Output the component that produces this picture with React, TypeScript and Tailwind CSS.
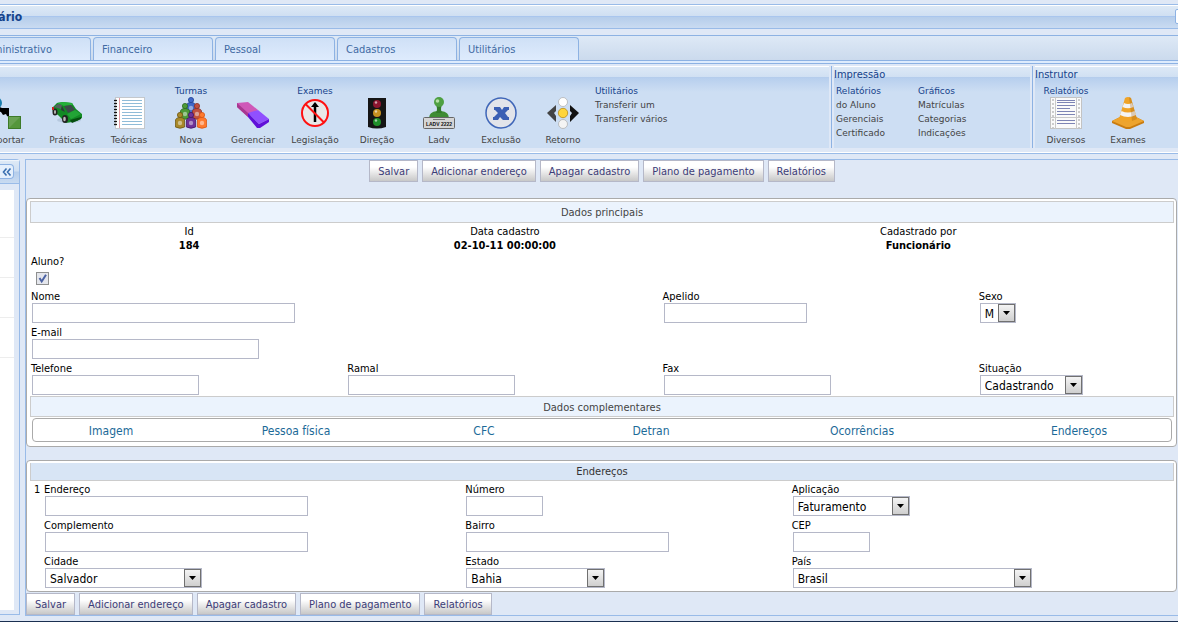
import React from "react";

const TABS = ["Administrativo", "Financeiro", "Pessoal", "Cadastros", "Utilitários"];
const ACTIONS = [
  "Salvar",
  "Adicionar endereço",
  "Apagar cadastro",
  "Plano de pagamento",
  "Relatórios",
];
const SECTIONS = ["Imagem", "Pessoa física", "CFC", "Detran", "Ocorrências", "Endereços"];

const Icon = ({ children }: { children: React.ReactNode }) => (
  <svg viewBox="0 0 32 32" className="block h-8 w-8" aria-hidden="true">
    {children}
  </svg>
);

const ImportIcon = () => (
  <Icon>
    <circle cx="7" cy="6" r="6" fill="#1c7fae" />
    <path d="M8 9l5 2h7v9l-2-1-1-2-3 1-2-3-4-1z" fill="#000" />
    <rect x="19.500" y="19.500" width="12" height="12" fill="#55963c" stroke="#3d7a28" />
    <path d="M20 20h11L20 31z" fill="#fff" opacity=".12" />
  </Icon>
);

const CarIcon = () => (
  <Icon>
    <ellipse cx="18" cy="23" rx="12" ry="3" fill="#9fb3cc" opacity=".5" />
    <path d="M1 11l5-5 6-1 9 1 4 6 6 5v4l-5 3-11 2-8-8-5-3z" fill="#128a24" />
    <path d="M6 6l6-1 9 1 1 2-9 1z" fill="#24b03a" />
    <path d="M3 10l4-3 4 1-1 4z" fill="#55615f" />
    <path d="M13 9l7-1 4 5-7 3z" fill="#3c4a4a" />
    <path d="M11 9l3 6-4-2z" fill="#2c3838" />
    <path d="M16 17l8-4 6 4-10 5z" fill="#22a436" />
    <ellipse cx="4" cy="15" rx="2.500" ry="3.500" fill="#222" />
    <ellipse cx="4" cy="15" rx="1" ry="2" fill="#bbb" />
    <ellipse cx="14" cy="22" rx="3" ry="4" fill="#222" />
    <ellipse cx="13.500" cy="22" rx="1.300" ry="2.200" fill="#bbb" />
    <path d="M19 23l11-3v2l-9 4z" fill="#064d10" />
    <path d="M1 10h2v3H1z" fill="#c22" />
  </Icon>
);

const NotebookIcon = () => (
  <Icon>
    <rect x="2.500" y=".5" width="29" height="31" fill="#fff" stroke="#c4c8cc" />
    {[4, 7, 10, 13, 16, 19, 22, 25, 28].map((y) => (
      <path key={y} d={`M9 ${y - 0.5}h20`} stroke="#8fbcd8" />
    ))}
    <path d="M6.500 1v30" stroke="#e59aa0" />
    {[3, 6, 9, 12, 15, 18, 21, 24, 27].map((y) => (
      <path key={y} d={`M1 ${y + 0.5}h3`} stroke="#111" strokeWidth="1.300" />
    ))}
  </Icon>
);

const Person = ({ x, y, fill, dark }: { x: number; y: number; fill: string; dark: string }) => (
  <g transform={`translate(${x} ${y})`} fill={fill} stroke={dark} strokeWidth=".8">
    <path d="M-4.600 9q0-3.500 4.600-3.500t4.600 3.500v6q-4.600 2.500-9.200 0z" />
    <circle cx="0" cy="3" r="2.600" />
    <circle cx="0" cy="11" r="2.200" fill="#fff" stroke="none" opacity=".45" />
  </g>
);

const ClassIcon = () => (
  <Icon>
    <Person x={16} y={0} fill="#3f68c8" dark="#1e3f92" />
    <Person x={10} y={6} fill="#4d9a38" dark="#2b6a1c" />
    <Person x={22} y={6} fill="#c0503f" dark="#8c2f22" />
    <Person x={5} y={15} fill="#a8892a" dark="#6f5710" />
    <Person x={16} y={15} fill="#6f3298" dark="#431466" />
    <Person x={27} y={15} fill="#ff7a2e" dark="#d85510" />
  </Icon>
);

const EraserIcon = () => (
  <Icon>
    <path d="M0 6l11-1 10 8-10 7L0 10z" fill="#cf58b8" />
    <path d="M0 6v4l11 10v-4z" fill="#a83890" />
    <path d="M21 13l11 9-10 5-11-11z" fill="#9050ff" />
    <path d="M11 16v4l9 11h3l9-6v-3l-10 5z" fill="#6010d8" />
  </Icon>
);

const NoTurnIcon = () => (
  <Icon>
    <circle cx="16" cy="16" r="13" fill="#e8e8e8" stroke="#f11" strokeWidth="2" />
    <path d="M16 25V9" stroke="#000" strokeWidth="2.500" />
    <path d="M12 10l4-5 4 5z" fill="#000" />
    <path d="M6.500 7l19 19" stroke="#f11" strokeWidth="2" />
  </Icon>
);

const TrafficIcon = () => (
  <Icon>
    <path d="M7 1h18v29q-9 3-18 0z" fill="#151515" />
    <circle cx="16" cy="7" r="4" fill="#8c1630" />
    <circle cx="16" cy="16" r="4" fill="#c69020" />
    <circle cx="16" cy="25" r="4" fill="#1f8f2a" />
    <g fill="#fff" opacity=".6">
      <circle cx="15" cy="5.500" r="1.200" />
      <circle cx="15" cy="14.500" r="1.200" />
      <circle cx="15" cy="23.500" r="1.200" />
    </g>
  </Icon>
);

const PlateIcon = () => (
  <Icon>
    <path d="M6 21q0-6 8-7h4q8 1 8 7z" fill="#3f8c34" />
    <path d="M13 16q2-4 0-8h6q-2 4 0 8z" fill="#347b2b" />
    <circle cx="16" cy="5" r="5" fill="#4ea042" />
    <circle cx="14.500" cy="4" r="1.800" fill="#b5dfa6" />
    <rect x=".5" y="20.500" width="31" height="11" rx="1" fill="#d5d5d5" stroke="#666" />
    <path d="M10 22.500h12" stroke="#777" />
    <text
      x="16"
      y="29"
      textAnchor="middle"
      fontFamily="Liberation Sans, sans-serif"
      fontSize="5"
      fontWeight="700"
      fill="#111"
    >
      LADV 2222
    </text>
  </Icon>
);

const DeleteIcon = () => (
  <Icon>
    <circle cx="16" cy="16" r="15" fill="#e2e4ea" stroke="#3f66b8" strokeWidth="1.500" />
    <path d="M9 10h6l2 3 2-3h5v3h-1l-3 3 3 4h1v3h-6l-3-3-2 3H8v-3h1l4-4-3-3H9z" fill="#3c60b4" />
  </Icon>
);

const ReturnIcon = () => (
  <Icon>
    <path d="M9 8v6l-2 2 2 3v6l-9-9z" fill="#444" />
    <path d="M23 8v6l2 2-2 3v6l9-9z" fill="#111" />
    <circle cx="16" cy="5" r="4.500" fill="#fff" stroke="#aaa" strokeWidth=".7" />
    <circle cx="16" cy="16" r="4.700" fill="#ffd53c" stroke="#b98c14" strokeWidth=".8" />
    <circle cx="16" cy="27" r="4.500" fill="#f4f4f4" stroke="#aaa" strokeWidth=".7" />
  </Icon>
);

const ReportIcon = () => (
  <Icon>
    <rect x=".5" y=".5" width="31" height="31" fill="#fafafa" stroke="#c3c3c3" />
    <path d="M5.500 0v32M26.500 0v32M0 20.500h32" stroke="#c9c9c9" />
    <path d="M3 2v29M29 2v29" stroke="#ccc" strokeWidth="2" strokeDasharray="2 2" />
    <path
      d="M7 3.500h18M7 5.500h18M7 8.500h18M7 11.500h13M7 14.500h18M7 17.500h18M7 23.500h18M7 26.500h18"
      stroke="#7d84b4"
    />
  </Icon>
);

const ConeIcon = () => (
  <Icon>
    <path d="M0 24l10-5h12l10 5v2l-14 6h-4L0 26z" fill="#c97c10" />
    <path d="M0 24l10-5h12l10 5-14 6h-4z" fill="#eda42e" />
    <path d="M13 1q3-2 6 0l6 21q-9 5-18 0z" fill="#f0a428" />
    <path d="M12 6q4 2 8 0l1.500 4q-5.500 2.500-11 0z" fill="#f4f4f4" />
    <path d="M9.500 14q6.500 3 13 0l1.500 4q-8 4-16 0z" fill="#f4f4f4" />
    <path d="M17 0l2 1 6 21-5 2z" fill="#8a4c00" opacity=".25" />
  </Icon>
);

const TOOLS = [
  { name: "Importar", icon: <ImportIcon /> },
  { name: "Práticas", icon: <CarIcon /> },
  { name: "Teóricas", icon: <NotebookIcon /> },
  { name: "Nova", title: "Turmas", icon: <ClassIcon /> },
  { name: "Gerenciar", icon: <EraserIcon /> },
  { name: "Legislação", title: "Exames", icon: <NoTurnIcon /> },
  { name: "Direção", icon: <TrafficIcon /> },
  { name: "Ladv", icon: <PlateIcon /> },
  { name: "Exclusão", icon: <DeleteIcon /> },
  { name: "Retorno", icon: <ReturnIcon /> },
];

const Tool = ({ name, title, icon }: { name: string; title?: string; icon: React.ReactNode }) => (
  <div className="flex w-[62px] shrink-0 flex-col items-center">
    <span className="h-3.5 leading-4 text-[#15428b]">{title}</span>
    <button type="button" className="flex flex-col items-center gap-1">
      {icon}
      <span>{name}</span>
    </button>
  </div>
);

const LinkList = ({ title, items }: { title: string; items: string[] }) => (
  <div className="flex flex-col items-start pl-px leading-4 whitespace-nowrap">
    <span className="h-3.5 text-[#15428b]">{title}</span>
    {items.map((item) => (
      <button type="button" key={item} className="h-3.5">
        {item}
      </button>
    ))}
  </div>
);

const Group = ({
  title,
  className,
  children,
}: {
  title?: string;
  className: string;
  children: React.ReactNode;
}) => (
  <div
    className={`h-[82px] bg-[linear-gradient(to_bottom,#fff_0,#fff_1px,#dde9f6_1px,#d0e0f3_11px,#b3cbeb_11px,#b7cfee_12px,#cddef3_26px)] ${className}`}
  >
    <div className="h-[17px] text-[11px] leading-[18px] text-[#15428b]">{title}</div>
    <div className="flex font-['Verdana','DejaVu_Sans',sans-serif] text-[9px] leading-3.5 text-[#444]">
      {children}
    </div>
  </div>
);

const Actions = ({ className }: { className: string }) => (
  <div className={`flex gap-1 ${className}`}>
    {ACTIONS.map((action) => (
      <button
        type="button"
        key={action}
        className="h-[22px] border border-[#b5b8c8] bg-linear-to-b from-white from-30% to-[#c8c8c8] px-2 pt-0.5 text-[11px] whitespace-nowrap text-[#3c3c78]"
      >
        {action}
      </button>
    ))}
  </div>
);

const Input = ({ label, id, width }: { label: string; id: string; width: string }) => (
  <div className="flex flex-col items-start">
    <label htmlFor={id} className="h-3.5 leading-4">
      {label}
    </label>
    <input
      id={id}
      type="text"
      className={`ml-px h-5 border border-[#b5b8c8] bg-white px-1 text-xs ${width}`}
    />
  </div>
);

const Select = ({
  label,
  id,
  width,
  value,
}: {
  label: string;
  id: string;
  width: string;
  value: string;
}) => (
  <div className="flex flex-col items-start">
    <label htmlFor={id} className="h-3.5 leading-4">
      {label}
    </label>
    <div className={`relative ml-px ${width}`}>
      <select
        id={id}
        className="block h-5 w-full appearance-none border border-[#b5b8c8] bg-white pt-px pl-1 text-xs text-black"
      >
        <option>{value}</option>
      </select>
      <span className="pointer-events-none absolute top-px right-px flex h-[18px] w-[17px] items-center justify-center border border-[#707070] bg-linear-to-b from-[#f4f4f4] to-[#cfcfcf]">
        <svg viewBox="0 0 7 4" className="h-1 w-[7px]" aria-hidden="true">
          <path d="M0 0h7L3.500 4z" fill="#000" />
        </svg>
      </span>
    </div>
  </div>
);

const App = () => {
  return (
    <div className="flex min-h-screen flex-col overflow-hidden border-b border-[#1b2f50] bg-[#dfe8f6] pt-1 font-['Tahoma','DejaVu_Sans_Condensed','DejaVu_Sans',sans-serif] text-[11px] leading-3.5 text-black">
      <header className="flex h-[25px] items-center justify-between border-y border-[#99bbe8] bg-[linear-gradient(to_bottom,#fff_0,#fff_1px,#dde9f6_1px,#cfdff2_11px,#a9c6ee_11px,#a9c6ee_12px,#b5cdeb_12px,#c9dbf1_23px)]">
        <h1 className="-ml-[49px] pt-px text-xs font-bold text-[#15428b]">Funcionário</h1>
        <button
          type="button"
          aria-label="Recolher"
          className="-mr-3 h-[15px] w-[15px] rounded-xs border border-[#8db2e3] bg-white"
        />
      </header>

      <nav className="mt-1.5 border-y border-[#8db2e3] bg-[#deecfd] pb-0.5">
        <div className="flex gap-0.5 border-b border-[#8db2e3] bg-linear-to-b from-[#dee9f6] to-[#cbdaed] pt-px">
          {TABS.map((tab) => (
            <button
              type="button"
              key={tab}
              className="h-[23px] w-[120px] shrink-0 rounded-t-sm border border-b-0 border-[#8db2e3] bg-linear-to-b from-[#cfe0f6] to-[#deebfd] pt-0.5 pl-2 text-left text-[#416aa3] first:-ml-[29px]"
            >
              {tab}
            </button>
          ))}
        </div>
      </nav>

      <div className="mt-0.5 flex border-b border-white bg-[#dfe8f6] pb-1">
        <Group className="flex-1">
          <div className="-ml-[26px] flex">
            {TOOLS.map((tool) => (
              <Tool key={tool.name} {...tool} />
            ))}
          </div>
          <LinkList title="Utilitários" items={["Transferir um", "Transferir vários"]} />
        </Group>
        <div className="mr-0.5 ml-0.5 w-px bg-[#8db2e3]" />
        <Group title="Impressão" className="w-[196px]">
          <div className="grid grid-cols-[82px_1fr] pl-px">
            <LinkList title="Relatórios" items={["do Aluno", "Gerenciais", "Certificado"]} />
            <LinkList title="Gráficos" items={["Matrículas", "Categorias", "Indicações"]} />
          </div>
        </Group>
        <div className="mr-0.5 ml-0.5 w-px bg-[#8db2e3]" />
        <Group title="Instrutor" className="w-[143px]">
          <Tool name="Diversos" title="Relatórios" icon={<ReportIcon />} />
          <Tool name="Exames" icon={<ConeIcon />} />
        </Group>
      </div>

      <div className="mb-[5px] flex flex-1 gap-[5px] border-t border-[#99bbe8] pt-[5px]">
        <aside className="mb-px flex w-5 shrink-0 flex-col rounded-tr-sm border border-l-0 border-[#99bbe8]">
          <div className="h-6 border-b border-[#99bbe8] bg-[linear-gradient(to_bottom,#fff_0,#dde9f6_1px,#cfdff2_11px,#b5cdeb_12px,#c9dbf1_23px)] pt-1">
            <button
              type="button"
              aria-label="Recolher painel"
              className="flex h-[15px] w-3.5 items-center justify-center rounded-r-sm border border-l-0 border-[#8db2e3] bg-[#e4effc]"
            >
              <svg viewBox="0 0 10 8" className="h-2 w-2.5" aria-hidden="true">
                <path
                  d="M4.500 .5L1.500 4l3 3.500M8.500 .5L5.500 4l3 3.500"
                  fill="none"
                  stroke="#3a6fb0"
                  strokeWidth="1.600"
                />
              </svg>
            </button>
          </div>
          <div className="mt-1.5 mr-[5px] mb-1 flex-1 bg-white">
            <div className="h-12 border-b border-[#ededed]" />
            <div className="h-10 border-b border-[#ededed]" />
            <div className="h-10 border-b border-[#ededed]" />
            <div className="h-10 border-b border-[#ededed]" />
          </div>
        </aside>

        <main className="min-w-0 flex-1 border border-r-0 border-[#99bbe8]">
          <Actions className="justify-center" />
          <form>
            <section className="mt-4 mr-px rounded-sm border border-[#aaa] bg-white pt-0.5 pr-0.5 pb-1 pl-[3px]">
              <h2 className="h-[22px] border border-[#ccc] bg-[#ebf3fd] text-center leading-[22px] text-[#444]">
                Dados principais
              </h2>
              <div className="grid grid-cols-[316fr_315fr_316fr_195fr] gap-y-0.5 py-px pl-px">
                <div className="pt-px text-center">
                  <p>Id</p>
                  <p className="font-bold">184</p>
                </div>
                <div className="pt-px text-center">
                  <p>Data cadastro</p>
                  <p className="font-bold">02-10-11 00:00:00</p>
                </div>
                <div className="col-span-2 pt-px text-center">
                  <p>Cadastrado por</p>
                  <p className="font-bold">Funcionário</p>
                </div>
                <div className="col-span-4 flex h-8 flex-col items-start gap-[3px]">
                  <label htmlFor="aluno">Aluno?</label>
                  <div className="relative ml-[5px] h-[13px] w-[13px]">
                    <input
                      id="aluno"
                      type="checkbox"
                      defaultChecked
                      className="peer block h-[13px] w-[13px] appearance-none border border-[#8e8f8f] bg-[#e4e6ec]"
                    />
                    <svg
                      viewBox="0 0 13 13"
                      className="pointer-events-none invisible absolute inset-0 peer-checked:visible"
                      aria-hidden="true"
                    >
                      <path d="M3.500 6l2.200 3.500L10 2.800" fill="none" stroke="#4b62a3" strokeWidth="2" />
                    </svg>
                  </div>
                </div>
                <div className="col-span-2">
                  <Input label="Nome" id="nome" width="w-[263px]" />
                </div>
                <Input label="Apelido" id="apelido" width="w-[143px]" />
                <Select label="Sexo" id="sexo" width="w-9" value="M" />
                <div className="col-span-4">
                  <Input label="E-mail" id="email" width="w-[227px]" />
                </div>
                <Input label="Telefone" id="telefone" width="w-[167px]" />
                <Input label="Ramal" id="ramal" width="w-[167px]" />
                <Input label="Fax" id="fax" width="w-[167px]" />
                <Select label="Situação" id="situacao" width="w-[103px]" value="Cadastrando" />
              </div>
              <h2 className="h-[21px] border border-[#ccc] bg-[#ebf3fd] text-center leading-[22px] text-[#444]">
                Dados complementares
              </h2>
              <div className="mx-0.5 mt-px grid h-6 grid-cols-[156fr_214fr_162fr_172fr_250fr_184fr] items-center rounded-sm border border-[#aaa] pt-px text-center text-xs text-[#1c6a98]">
                {SECTIONS.map((section) => (
                  <a key={section} href="#">
                    {section}
                  </a>
                ))}
              </div>
            </section>

            <section className="mt-[13px] mr-px rounded-sm border border-[#aaa] bg-white pt-0.5 pr-0.5 pb-[3px] pl-[3px]">
              <h2 className="h-[18px] border border-t-0 border-[#ccc] bg-[#d8e5f5] text-center leading-[18px] text-[#333]">
                Endereços
              </h2>
              <div className="grid grid-cols-[10px_421fr_326fr_382fr] gap-y-0.5 pt-px pl-1">
                <span className="row-span-3 leading-4">1</span>
                <Input label="Endereço" id="endereco" width="w-[263px]" />
                <Input label="Número" id="numero" width="w-[77px]" />
                <Select label="Aplicação" id="aplicacao" width="w-[117px]" value="Faturamento" />
                <Input label="Complemento" id="complemento" width="w-[263px]" />
                <Input label="Bairro" id="bairro" width="w-[203px]" />
                <Input label="CEP" id="cep" width="w-[77px]" />
                <Select label="Cidade" id="cidade" width="w-[157px]" value="Salvador" />
                <Select label="Estado" id="estado" width="w-[139px]" value="Bahia" />
                <Select label="País" id="pais" width="w-[239px]" value="Brasil" />
              </div>
            </section>
          </form>
          <Actions className="mt-px" />
        </main>
      </div>
    </div>
  );
};

export default App;
